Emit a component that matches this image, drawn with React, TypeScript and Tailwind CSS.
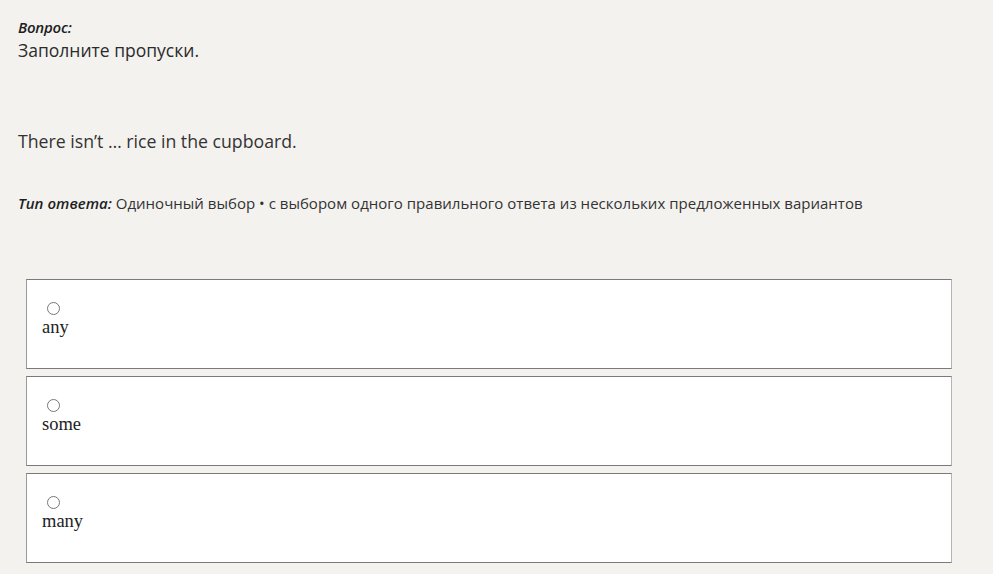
import React from 'react';

const options = ['any', 'some', 'many'];

export default function App() {
  return (
    <div className="min-h-[574px] w-full bg-[#f3f2ef] text-[#262626]" style={{ fontFamily: '"Open Sans", "Noto Sans", sans-serif' }}>
      <div className="px-[18px] pt-[17px]">
        <div className="text-[15px] font-semibold italic leading-[20px] tracking-[-0.2px] text-[#1e1e1e]">Вопрос:</div>
        <div className="mt-[1px] text-[17.5px] leading-[24px] text-[#2b2b2b]">Заполните пропуски.</div>

        <div className="mt-[67px] text-[17.7px] leading-[24px] text-[#333]">There isn’t … rice in the cupboard.</div>

        <div className="mt-[40px] text-[15px] leading-[20px] tracking-[0.02px] text-[#333]">
          <span className="font-semibold italic text-[#1e1e1e]">Тип ответа:</span> Одиночный выбор • с выбором одного правильного ответа из нескольких предложенных вариантов
        </div>
      </div>

      <div className="ml-[26px] mt-[66px] flex w-[926px] flex-col gap-[7px]">
        {options.map((o) => (
          <div
            key={o}
            className="h-[90px] border border-t-[#7a7a7a] border-b-[#7a7a7a] border-l-[#9a9a9a] border-r-[#b5b5b5] bg-white px-[15px] pt-[22px]"
          >
            <div className="ml-[5px] h-[13px] w-[13px] rounded-full border border-[#777] bg-white" />
            <div className="mt-[2px] text-[18.5px] leading-[20px] text-[#222]" style={{ fontFamily: '"Liberation Serif", serif' }}>{o}</div>
          </div>
        ))}
      </div>
    </div>
  );
}
